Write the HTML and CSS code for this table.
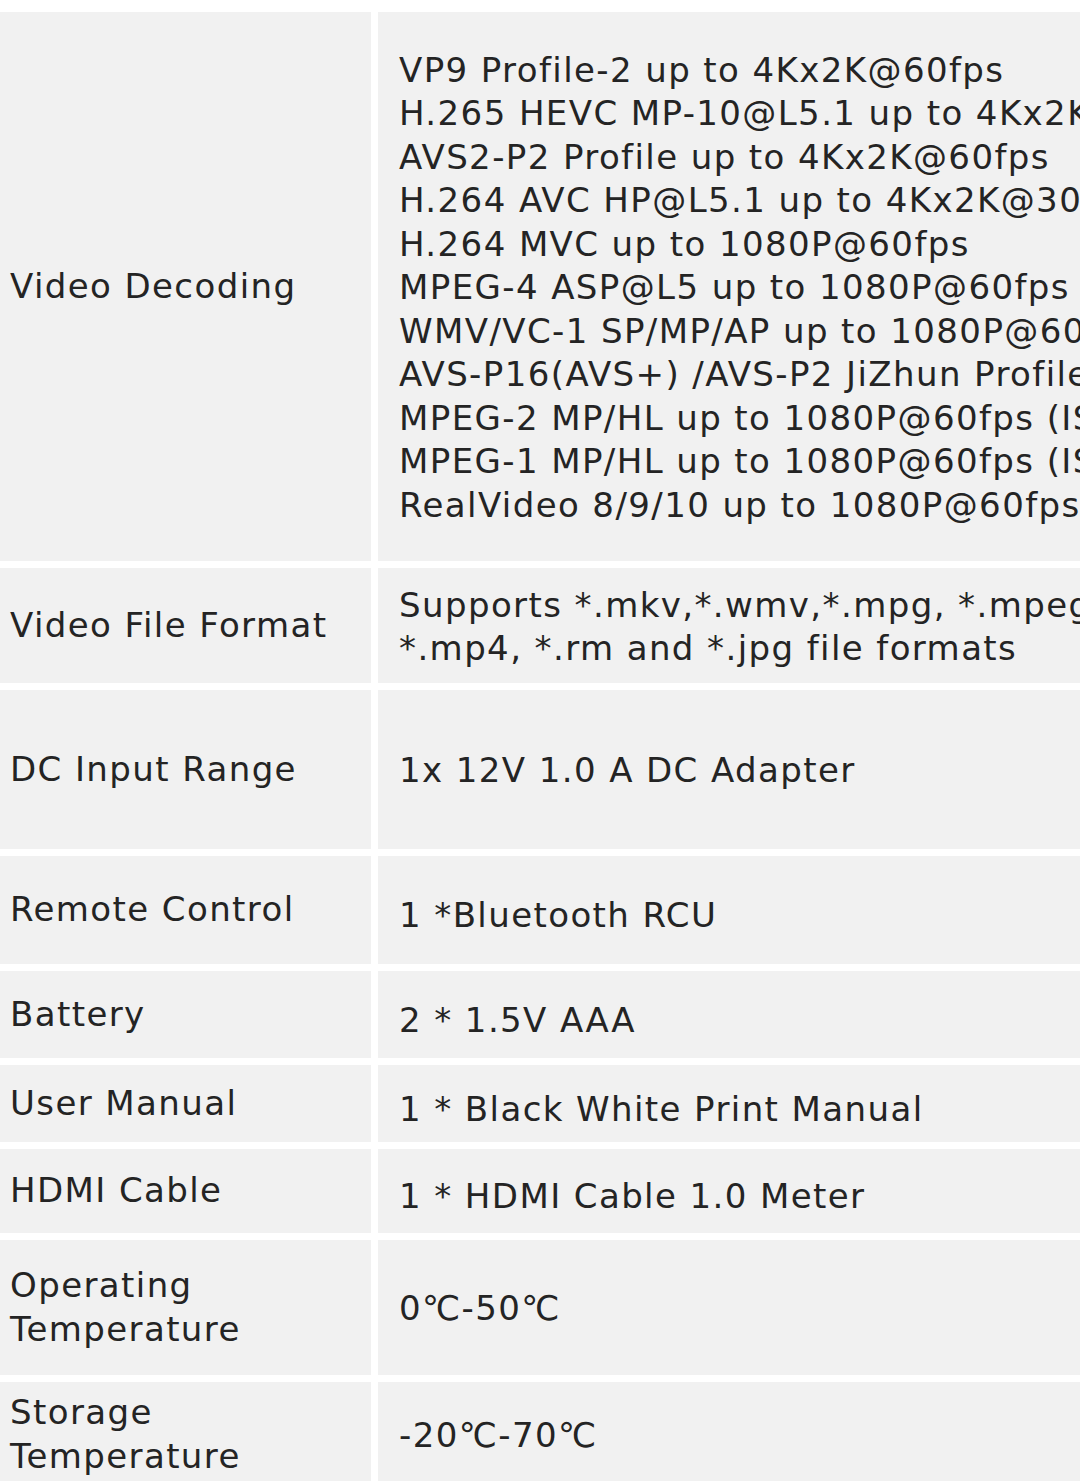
FILE: index.html
```html
<!DOCTYPE html>
<html lang="en">
<head>
    <meta charset="UTF-8">
    <meta name="viewport" content="width=device-width, initial-scale=1.0">
    <title>Specifications</title>
    <link rel="stylesheet" href="styles.css">
</head>
<body>
<table class="spec-table">
    <tr class="row-decoding">
        <td class="label">Video Decoding</td>
        <td class="value">
            VP9 Profile-2 up to 4Kx2K@60fps<br>
            H.265 HEVC MP-10@L5.1 up to 4Kx2K@60fps<br>
            AVS2-P2 Profile up to 4Kx2K@60fps<br>
            H.264 AVC HP@L5.1 up to 4Kx2K@30fps<br>
            H.264 MVC up to 1080P@60fps<br>
            MPEG-4 ASP@L5 up to 1080P@60fps (ISO-14496)<br>
            WMV/VC-1 SP/MP/AP up to 1080P@60fps<br>
            AVS-P16(AVS+) /AVS-P2 JiZhun Profile up to 1080P@60fps<br>
            MPEG-2 MP/HL up to 1080P@60fps (ISO-13818)<br>
            MPEG-1 MP/HL up to 1080P@60fps (ISO-11172)<br>
            RealVideo 8/9/10 up to 1080P@60fps
        </td>
    </tr>
    <tr class="row-format">
        <td class="label">Video File Format</td>
        <td class="value">Supports *.mkv,*.wmv,*.mpg, *.mpeg, *.dat, *.avi, *.mov, *.iso,<br>*.mp4, *.rm and *.jpg file formats</td>
    </tr>
    <tr class="row-power">
        <td class="label">DC Input Range</td>
        <td class="value">1x 12V 1.0 A DC Adapter</td>
    </tr>
    <tr class="row-remote">
        <td class="label">Remote Control</td>
        <td class="value value-low">1 *Bluetooth RCU</td>
    </tr>
    <tr class="row-battery">
        <td class="label">Battery</td>
        <td class="value value-low">2 * 1.5V AAA</td>
    </tr>
    <tr class="row-manual">
        <td class="label">User Manual</td>
        <td class="value value-low">1 * Black White Print Manual</td>
    </tr>
    <tr class="row-cable">
        <td class="label">HDMI Cable</td>
        <td class="value value-low">1 * HDMI Cable 1.0 Meter</td>
    </tr>
    <tr class="row-operating">
        <td class="label">Operating<br>Temperature</td>
        <td class="value">0℃-50℃</td>
    </tr>
    <tr class="row-storage">
        <td class="label">Storage<br>Temperature</td>
        <td class="value">-20℃-70℃</td>
    </tr>
</table>
</body>
</html>
```

FILE: styles.css
```css
html, body {
    margin: 0;
    padding: 0;
    background: #ffffff;
    overflow: hidden;
}

body {
    font-family: "DejaVu Sans", Verdana, sans-serif;
    font-size: 34px;
    line-height: 43.5px;
    letter-spacing: 1.4px;
    color: #242424;
}

.spec-table {
    border-collapse: separate;
    border-spacing: 7px;
    margin: 5px 0 0 -7px;
    width: 1600px;
    table-layout: fixed;
}

.spec-table td {
    background-color: #f1f1f1;
    vertical-align: middle;
    padding: 0;
    white-space: nowrap;
    overflow: hidden;
}

.label {
    width: 361px;
    padding-left: 10px !important;
}

.value {
    padding-left: 21px !important;
    padding-top: 3px !important;
}

.value-low {
    padding-top: 12px !important;
}

.row-decoding { height: 549px; }
.row-format { height: 115px; }
.row-power { height: 159px; }
.row-remote { height: 108px; }
.row-battery { height: 87px; }
.row-manual { height: 77px; }
.row-cable { height: 84px; }
.row-operating { height: 135px; }
.row-storage { height: 105px; }
```
